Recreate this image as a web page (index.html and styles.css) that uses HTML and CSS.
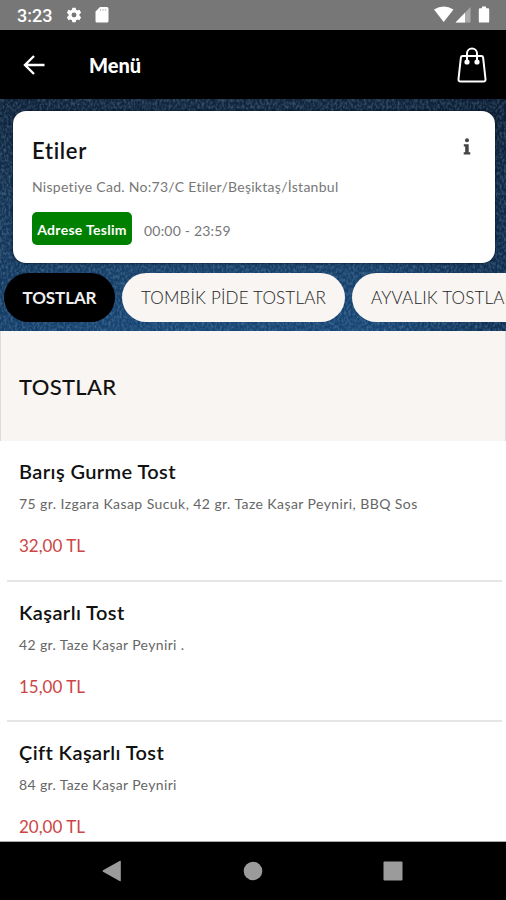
FILE: index.html
```html
<!DOCTYPE html>
<html lang="tr">
<head>
<meta charset="utf-8">
<title>Menü</title>
<link rel="stylesheet" href="styles.css">
</head>
<body>
<div class="phone">
  <div class="status">
    <span class="clock">3:23</span>
    <svg class="gear" width="16" height="16" viewBox="0 0 24 24"><path fill="#fff" fill-rule="evenodd" d="M9.5 1h5l.6 3.2 2 1.1 3.1-1.1 2.5 4.3-2.5 2.2v2.6l2.5 2.2-2.5 4.3-3.1-1.1-2 1.1-.6 3.2h-5l-.6-3.2-2-1.1-3.1 1.1-2.5-4.3 2.5-2.2v-2.6L1.300 8.500l2.500-4.300 3.100 1.100 2-1.100zM12 8.300a3.700 3.700 0 1 0 0 7.400 3.700 3.700 0 0 0 0-7.400z"/></svg>
    <svg class="sd" width="14" height="16" viewBox="0 0 14 16"><path fill="#fff" d="M5 0h7a1.500 1.500 0 0 1 1.500 1.500v12.500a1.500 1.500 0 0 1-1.500 1.500H2A1.500 1.500 0 0 1 .5 14V4.500z"/><path stroke="#ccc" stroke-width="1.200" d="M5.500 2v2M8 2v2M10.500 2v2"/></svg>
    <svg class="signals" width="58" height="18" viewBox="0 0 58 18"><path fill="#fff" d="M0 3.500Q9.700-2.500 19.500 3.500L9.700 16z"/><path fill="#a9a9a9" d="M36.500 1v15.500H21.500z"/><path fill="#fff" d="M31 6.700v9.800h-9.500z"/><path fill="#fff" d="M48 .5h4v1.700h2a1.200 1.200 0 0 1 1.200 1.200v12a1.200 1.200 0 0 1-1.200 1.200h-8a1.200 1.200 0 0 1-1.200-1.200v-12A1.200 1.200 0 0 1 46 2.200h2z"/></svg>
  </div>
  <header class="appbar">
    <svg class="back" width="22" height="20" viewBox="0 0 22 20"><path fill="none" stroke="#fff" stroke-width="2.400" d="M11 1L2 10l9 9M2 10h19.500"/></svg>
    <h1>Menü</h1>
    <svg class="bag" width="30" height="38" viewBox="0 0 30 38"><g fill="none" stroke="#fff" stroke-width="2" stroke-linejoin="round"><path d="M5.500 10h19q1.400 0 1.600 1.500l2.400 21.500q.2 2.500-2 2.500h-23q-2.200 0-2-2.500L3.900 11.500Q4.100 10 5.500 10z"/><path d="M10 15V7.500a5 5 0 0 1 10 0V15"/></g><circle cx="10" cy="16" r="2.600" fill="#fff"/><circle cx="20" cy="16" r="2.600" fill="#fff"/></svg>
  </header>
  <section class="hero">
    <svg class="denim" width="506" height="232"><filter id="weave" x="0" y="0" width="100%" height="100%"><feTurbulence type="fractalNoise" baseFrequency=".45 .3" numOctaves="2" seed="8"/><feColorMatrix values="0 0 0 0 .35  0 0 0 0 .6  0 0 0 0 .78  1.600 0 0 0 -.6"/></filter><rect width="506" height="232" filter="url(#weave)"/></svg>
    <div class="card">
      <div class="row"><h2>Etiler</h2>
        <svg class="info" width="8" height="17" viewBox="0 0 8 17"><circle cx="4" cy="2.200" r="2" fill="#444"/><path fill="#444" d="M.8 6.200h4.900v8h1.600v2.300H.7v-2.300h1.500V8.500H.8z"/></svg></div>
      <p class="addr">Nispetiye Cad. No:73/C Etiler/Beşiktaş/İstanbul</p>
      <div class="service"><span class="badge">Adrese Teslim</span><span class="hours">00:00 - 23:59</span></div>
    </div>
    <nav class="tabs">
      <span class="tab active">TOSTLAR</span>
      <span class="tab second">TOMBİK PİDE TOSTLAR</span>
      <span class="tab third">AYVALIK TOSTLAR</span>
    </nav>
  </section>
  <h2 class="section">TOSTLAR</h2>
  <main class="list">
    <article><h3>Barış Gurme Tost</h3><p class="long">75 gr. Izgara Kasap Sucuk, 42 gr. Taze Kaşar Peyniri, BBQ Sos</p><strong>32,00 TL</strong></article>
    <article><h3>Kaşarlı Tost</h3><p>42 gr. Taze Kaşar Peyniri .</p><strong>15,00 TL</strong></article>
    <article><h3>Çift Kaşarlı Tost</h3><p>84 gr. Taze Kaşar Peyniri</p><strong>20,00 TL</strong></article>
  </main>
  <footer class="navbar">
    <svg width="20" height="22" viewBox="0 0 20 22"><path fill="#9b9b9b" d="M18 .8q.8-.4.800.6v19.200q0 1-.8.600L1 11.700q-1-.7 0-1.400z"/></svg>
    <svg width="20" height="20" viewBox="0 0 20 20"><circle cx="10" cy="10" r="9.300" fill="#9b9b9b"/></svg>
    <svg width="20" height="20" viewBox="0 0 20 20"><rect x=".5" y=".5" width="19" height="19" rx="1" fill="#9b9b9b"/></svg>
  </footer>
</div>
</body>
</html>
```
FILE: styles.css
```css
* { box-sizing: border-box; margin: 0; padding: 0; }
body { background: #fff; font-family: Lato, "Liberation Sans", sans-serif; }
svg { display: block; flex: none; }
.phone { width: 506px; height: 900px; overflow: hidden; display: flex; flex-direction: column; white-space: nowrap; }

.status { height: 30px; flex: none; background: #777; display: flex; align-items: center; padding: 0 14px 0 17px; }
.clock { font: 500 18px/30px Roboto, sans-serif; color: #fff; width: 49px; padding-top: 2px; }
.sd { margin-left: 13px; }
.signals { margin-left: auto; }

.appbar { height: 69px; flex: none; background: #000; color: #fff; display: flex; align-items: center; padding: 0 19px 0 23px; }
.appbar h1 { font: 900 20px/24px Lato, sans-serif; margin-left: 44px; }
.bag { margin-left: auto; }

.hero { height: 232px; flex: none; position: relative; overflow: hidden; padding: 12px 0 0; background: linear-gradient(90deg, rgba(3,15,35,.15), transparent 30%, transparent 75%, rgba(3,15,35,.4)), linear-gradient(#10243c, #17385a 40%, #174574); }
.denim { position: absolute; inset: 0; opacity: .38; }
.card { position: relative; margin: 0 11px 0 13px; height: 152px; background: #fff; border-radius: 13px; padding: 25px 24px 0 19px; box-shadow: 0 0 3px #000b1c; }
.row { display: flex; justify-content: space-between; height: 30px; }
.row h2 { font-size: 22px; line-height: 30px; font-weight: 600; color: #111; letter-spacing: .7px; }
.info { margin-top: 2px; }
.addr { margin-top: 12px; font-size: 14px; line-height: 18px; color: #777; letter-spacing: .28px; }
.service { display: flex; align-items: center; margin-top: 16px; }
.badge { width: 100px; height: 33px; border-radius: 5px; background: #008000; color: #fff; font-size: 14px; font-weight: 700; line-height: 35px; text-align: center; letter-spacing: .3px; }
.hours { margin: 4px 0 0 12px; font-size: 14px; color: #777; letter-spacing: .2px; }
.tabs { position: relative; display: flex; gap: 7px; margin: 10px 0 0 4px; }
.tab { flex: none; height: 49px; border-radius: 25px; background: #f8f5f2; color: #222; font-size: 17px; font-weight: 300; line-height: 50px; text-align: center; letter-spacing: .2px; }
.tab.active { width: 111px; background: #000; color: #eee; font-weight: 700; letter-spacing: -.1px; }
.tab.second { width: 223px; }
.tab.third { width: 190px; text-align: left; padding-left: 19px; }

.section { height: 110px; flex: none; background: #f8f5f2; border: solid #dcdcdc; border-width: 0 1px; padding-left: 18px; font-size: 22px; line-height: 112px; font-weight: 500; color: #111; letter-spacing: .3px; }
.list { height: 401px; flex: none; overflow: hidden; border-bottom: 1px solid #aaa; }
.list article { height: 140.700px; margin: 0 4px 0 7px; padding: 17px 0 0 12px; border-bottom: 2px solid #e6e6e6; }
.list h3 { font-size: 20px; line-height: 26px; font-weight: 600; color: #111; letter-spacing: .4px; }
.list p { font-size: 14px; line-height: 20px; margin-top: 10px; color: #666; letter-spacing: .37px; }
.list p.long { letter-spacing: .43px; }
.list strong { display: block; font-size: 17px; line-height: 22px; margin-top: 21px; font-weight: 400; color: #cc4545; }
.navbar { height: 58px; flex: none; background: #000; display: flex; justify-content: space-between; align-items: center; padding: 0 103px 0 102px; }
```
